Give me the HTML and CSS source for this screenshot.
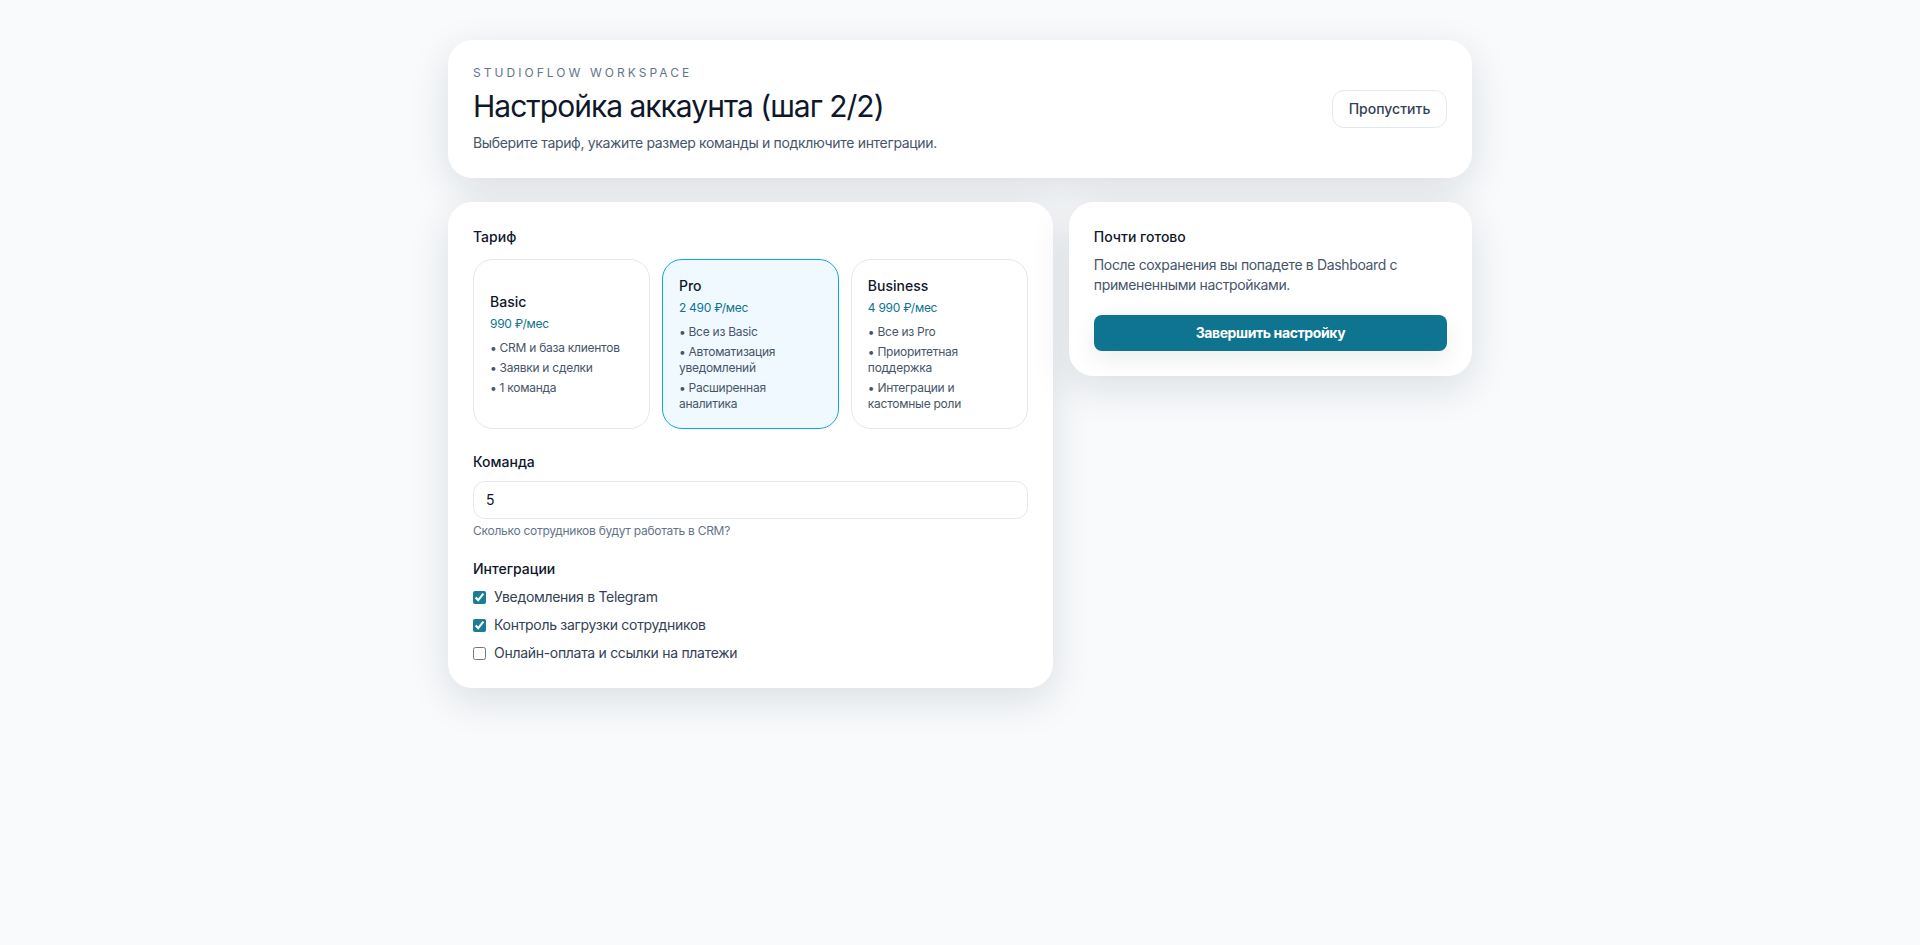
FILE: index.html
```html
<!DOCTYPE html>
<html lang="ru">
<head>
<meta charset="utf-8">
<title>Настройка аккаунта</title>
<link rel="stylesheet" href="styles.css">
</head>
<body>
<main class="page">
  <header class="card header">
    <div class="header-text">
      <p class="eyebrow">STUDIOFLOW WORKSPACE</p>
      <h1 class="title">Настройка аккаунта (шаг 2/2)</h1>
      <p class="subtitle">Выберите тариф, укажите размер команды и подключите интеграции.</p>
    </div>
    <button class="skip" type="button">Пропустить</button>
  </header>
  <div class="columns">
    <section class="card form">
      <h2 class="label">Тариф</h2>
      <div class="plans">
        <button class="plan" type="button">
          <span class="plan-name">Basic</span>
          <span class="plan-price">990 ₽/мес</span>
          <span class="plan-list"><span>• CRM и база клиентов</span><span>• Заявки и сделки</span><span>• 1 команда</span></span>
        </button>
        <button class="plan plan-active" type="button">
          <span class="plan-name">Pro</span>
          <span class="plan-price">2 490 ₽/мес</span>
          <span class="plan-list"><span>• Все из Basic</span><span>• Автоматизация уведомлений</span><span>• Расширенная аналитика</span></span>
        </button>
        <button class="plan" type="button">
          <span class="plan-name">Business</span>
          <span class="plan-price">4 990 ₽/мес</span>
          <span class="plan-list"><span>• Все из Pro</span><span>• Приоритетная поддержка</span><span>• Интеграции и кастомные роли</span></span>
        </button>
      </div>
      <label class="label label-team" for="team">Команда</label>
      <input class="input" id="team" type="number" value="5">
      <p class="hint">Сколько сотрудников будут работать в CRM?</p>
      <h2 class="label label-int">Интеграции</h2>
      <div class="checks">
        <label class="check"><input type="checkbox" checked><span>Уведомления в Telegram</span></label>
        <label class="check"><input type="checkbox" checked><span>Контроль загрузки сотрудников</span></label>
        <label class="check"><input type="checkbox"><span>Онлайн-оплата и ссылки на платежи</span></label>
      </div>
    </section>
    <aside class="card side">
      <h2 class="label">Почти готово</h2>
      <p class="side-text">После сохранения вы попадете в Dashboard с примененными настройками.</p>
      <button class="finish" type="button">Завершить настройку</button>
    </aside>
  </div>
</main>
</body>
</html>
```
FILE: styles.css
```css
* { box-sizing: border-box; }
html, body { margin: 0; padding: 0; }
body {
  background: #f8fafc;
  color: #0f172a;
  font-family: "Inter", "Noto Sans", sans-serif;
  min-height: 945px;
}
h1, h2, p { margin: 0; }
button, input { font-family: inherit; }
.page {
  width: 1024px;
  margin: 0 auto;
  padding-top: 40px;
  display: flex;
  flex-direction: column;
  gap: 24px;
}
.card {
  background: #fff;
  border: 1px solid #fff;
  border-radius: 24px;
  padding: 24px;
  box-shadow: 0 12px 40px rgba(15, 23, 42, 0.12);
}
.header {
  display: flex;
  align-items: center;
  justify-content: space-between;
}
.eyebrow {
  font-size: 12px;
  line-height: 16px;
  letter-spacing: 3.05px;
  color: #64748b;
}
.title {
  margin-top: 7px;
  font-size: 30px;
  line-height: 36px;
  font-weight: 400;
  letter-spacing: -0.99px;
  color: #0f172a;
}
.subtitle {
  margin-top: 9px;
  font-size: 14px;
  line-height: 20px;
  letter-spacing: -0.33px;
  color: #475569;
}
.skip {
  width: 115px;
  height: 38px;
  padding: 0;
  background: #fff;
  border: 1px solid #e2e8f0;
  border-radius: 12px;
  font-size: 14px;
  line-height: 20px;
  font-weight: 500;
  color: #334155;
}
.columns {
  display: grid;
  grid-template-columns: 1.5fr 1fr;
  gap: 16px;
  align-items: start;
}
.label {
  display: block;
  font-size: 14px;
  line-height: 20px;
  font-weight: 500;
  color: #0f172a;
}
.plans {
  margin-top: 12px;
  display: grid;
  grid-template-columns: repeat(3, 1fr);
  gap: 12px;
}
.plan {
  display: flex;
  flex-direction: column;
  justify-content: center;
  text-align: left;
  background: #fff;
  border: 1px solid #e2e8f0;
  border-radius: 20px;
  padding: 16px;
}
.plan-active {
  background: #f0f9ff;
  border-color: #0ea5e9;
}
.plan-name {
  font-size: 14px;
  line-height: 20px;
  font-weight: 500;
  color: #0f172a;
}
.plan-price {
  margin-top: 4px;
  font-size: 12px;
  line-height: 16px;
  letter-spacing: -0.27px;
  color: #0e7490;
}
.plan-list {
  margin-top: 8px;
  display: flex;
  flex-direction: column;
  gap: 4px;
  font-size: 12px;
  line-height: 16px;
  letter-spacing: -0.26px;
  color: #475569;
}
.label-team { margin-top: 23px; }
.input {
  display: block;
  width: 100%;
  height: 38px;
  margin-top: 9px;
  padding: 0 12px 2px;
  background: #fff;
  border: 1px solid #e2e8f0;
  border-radius: 12px;
  font-size: 14px;
  color: #0f172a;
  appearance: textfield;
}
.hint {
  margin-top: 4px;
  font-size: 12px;
  line-height: 16px;
  letter-spacing: -0.27px;
  color: #64748b;
}
.label-int { margin-top: 20px; }
.checks {
  margin-top: 8px;
  display: flex;
  flex-direction: column;
  gap: 8px;
}
.check {
  display: flex;
  align-items: center;
  gap: 8px;
  font-size: 14px;
  line-height: 20px;
  letter-spacing: -0.3px;
  color: #334155;
}
.check input {
  margin: 0;
  accent-color: #1a7d92;
}
.side-text {
  margin-top: 8px;
  font-size: 14px;
  line-height: 20px;
  letter-spacing: -0.35px;
  color: #475569;
}
.finish {
  display: block;
  width: 100%;
  height: 36px;
  margin-top: 20px;
  padding: 0 0 2px;
  background: #0e7490;
  border: 0;
  border-radius: 8px;
  font-size: 14px;
  font-weight: 700;
  letter-spacing: -0.4px;
  color: #fff;
  box-shadow: 0 8px 24px rgba(15, 23, 42, 0.08);
}
```
